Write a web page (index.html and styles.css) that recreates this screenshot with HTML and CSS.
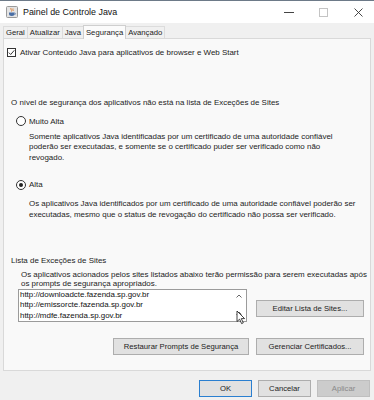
FILE: index.html
```html
<!DOCTYPE html>
<html lang="pt-BR">

<head>
    <meta charset="UTF-8">
    <meta name="viewport" content="width=device-width, initial-scale=1.0">
    <title>Painel de Controle Java</title>
    <link rel="stylesheet" href="styles.css">
</head>

<body>
    <div class="window">
        <div class="titlebar">
            <svg class="app-icon" width="12" height="12" viewBox="0 0 12 12">
                <rect x="0.5" y="0.5" width="11" height="11" rx="1" fill="#e4e4e4" stroke="#9a9a9a"/>
                <path d="M5 2 C4 3.5 6.5 4 5.5 5.5 M7 2.5 C6.3 3.5 7.8 4 7 5" stroke="#e07a2a" stroke-width="0.9" fill="none"/>
                <path d="M3 6.5 H8.5 V8 C8.5 9.2 7.5 10 6 10 H5.5 C4 10 3 9.2 3 8 Z" fill="#4a6fa5"/>
                <path d="M8.5 7 C10 7 10 8.6 8.4 8.6" stroke="#4a6fa5" stroke-width="0.7" fill="none"/>
            </svg>
            <span class="title">Painel de Controle Java</span>
            <div class="controls">
                <span class="ctl ctl-min"></span>
                <span class="ctl ctl-max"></span>
                <svg class="ctl-close" width="9" height="9" viewBox="0 0 9 9">
                    <path d="M0.5 0.5 L8.5 8.5 M8.5 0.5 L0.5 8.5" stroke="#333" stroke-width="0.9"/>
                </svg>
            </div>
        </div>

        <div class="tabs">
            <span class="tab">Geral</span>
            <span class="tab">Atualizar</span>
            <span class="tab">Java</span>
            <span class="tab active">Segurança</span>
            <span class="tab">Avançado</span>
        </div>

        <div class="panel">
            <div class="check-row">
                <svg class="checkbox" width="9" height="9" viewBox="0 0 9 9">
                    <rect x="0.5" y="0.5" width="8" height="8" fill="#fff" stroke="#333"/>
                    <path d="M1.8 4.6 L3.7 6.5 L7.3 2.3" stroke="#222" stroke-width="0.9" fill="none"/>
                </svg>
                <span>Ativar Conteúdo Java para aplicativos de browser e Web Start</span>
            </div>

            <p class="level">O nível de segurança dos aplicativos não está na lista de Exceções de Sites</p>

            <div class="radio-row">
                <span class="radio"></span>
                <span>Muito Alta</span>
            </div>
            <p class="desc">Somente aplicativos Java identificadas por um certificado de uma autoridade confiável poderão ser executadas, e somente se o certificado puder ser verificado como não<br>revogado.</p>

            <div class="radio-row radio-alta">
                <span class="radio checked"></span>
                <span>Alta</span>
            </div>
            <p class="desc">Os aplicativos Java identificados por um certificado de uma autoridade confiável poderão ser executadas, mesmo que o status de revogação do certificado não possa ser verificado.</p>

            <p class="section-title">Lista de Exceções de Sites</p>
            <p class="section-desc">Os aplicativos acionados pelos sites listados abaixo terão permissão para serem executadas após os prompts de segurança apropriados.</p>

            <div class="sites-row">
                <div class="listbox">
                    <div class="sites">
                        <div>http://downloadcte.fazenda.sp.gov.br</div>
                        <div>http://emissorcte.fazenda.sp.gov.br</div>
                        <div>http://mdfe.fazenda.sp.gov.br</div>
                    </div>
                    <div class="scroll">
                        <svg width="6" height="4" viewBox="0 0 6 4">
                            <path d="M0.5 3.5 L3 1 L5.5 3.5" stroke="#555" stroke-width="0.9" fill="none"/>
                        </svg>
                        <svg width="6" height="4" viewBox="0 0 6 4">
                            <path d="M0.5 3.5 L3 1 L5.5 3.5" stroke="#555" stroke-width="0.9" fill="none"/>
                        </svg>
                    </div>
                    <svg class="cursor" width="10" height="15" viewBox="0 0 10 15">
                        <path d="M1 1 V11.5 L3.6 9.2 L5.6 13.6 L7.3 12.8 L5.3 8.6 H8.6 Z" fill="#fff" stroke="#111" stroke-width="0.8" stroke-linejoin="round"/>
                    </svg>
                </div>
                <button class="btn btn-edit">Editar Lista de Sites...</button>
            </div>

            <div class="actions">
                <button class="btn btn-restore">Restaurar Prompts de Segurança</button>
                <button class="btn btn-certs">Gerenciar Certificados...</button>
            </div>
        </div>

        <div class="footer">
            <button class="btn btn-foot btn-ok">OK</button>
            <button class="btn btn-foot">Cancelar</button>
            <button class="btn btn-foot btn-disabled">Aplicar</button>
        </div>
    </div>
</body>

</html>
```

FILE: styles.css
```css
body {
    margin: 0;
    padding: 0;
    background-color: #f0f0f0;
    font-family: "Liberation Sans", Arial, sans-serif;
    font-size: 7.95px;
    color: #1c1c1c;
}

p {
    margin: 0;
}

.window {
    width: 374px;
    height: 400px;
    overflow: hidden;
    position: relative;
}

/* barra de titulo */
.titlebar {
    height: 23px;
    background-color: #ffffff;
    border-top: 1px solid #6d7a88;
    box-sizing: border-box;
    display: flex;
    align-items: center;
}

.app-icon {
    margin-left: 6px;
    margin-right: 5px;
}

.title {
    font-size: 8.9px;
    color: #111;
}

.controls {
    margin-left: auto;
    display: flex;
    align-items: center;
}

.ctl-min {
    width: 10px;
    height: 1px;
    background-color: #444;
    margin-right: 25px;
}

.ctl-max {
    width: 7px;
    height: 7px;
    border: 1px solid #c4c4c4;
    margin-right: 26px;
}

.ctl-close {
    margin-right: 11px;
}

/* abas */
.tabs {
    display: flex;
    align-items: flex-end;
    height: 14px;
    padding-left: 3px;
    margin-top: 1px;
    font-size: 7.7px;
}

.tab {
    height: 11px;
    line-height: 11px;
    padding: 0 2px;
    border: 1px solid #dcdcdc;
    border-bottom: none;
    margin-right: -1px;
    background-color: #f0f0f0;
}

.tab.active {
    height: 13px;
    line-height: 13px;
    background-color: #fbfbfb;
    border-color: #cfcfcf;
    position: relative;
    z-index: 1;
    margin-bottom: -1px;
}

/* painel */
.panel {
    margin: 0 3px;
    height: 333px;
    box-sizing: border-box;
    border: 1px solid #d9d9d9;
    background-color: #f9f9f9;
    padding-left: 3px;
}

.check-row {
    display: flex;
    align-items: center;
    gap: 4px;
    margin-top: 8px;
    height: 10px;
}

.level {
    margin-top: 41px;
    margin-left: 4px;
    line-height: 10.5px;
}

.radio-row {
    display: flex;
    align-items: center;
    gap: 3px;
    height: 11px;
    margin-top: 7px;
    margin-left: 9px;
}

.radio-alta {
    margin-top: 16px;
}

.radio {
    width: 8px;
    height: 8px;
    border: 1px solid #333;
    border-radius: 50%;
    background-color: #fff;
    position: relative;
}

.radio.checked::after {
    content: "";
    position: absolute;
    left: 2px;
    top: 2px;
    width: 4px;
    height: 4px;
    border-radius: 50%;
    background-color: #222;
}

.desc {
    margin: 5px 10px 0 22px;
    line-height: 10.5px;
}

.radio-alta + .desc {
    margin-top: 9px;
}

.section-title {
    margin-top: 36px;
    margin-left: 4px;
    line-height: 10.5px;
}

.section-desc {
    margin: 3px 2px 0 14px;
    line-height: 9.5px;
}

/* lista de sites */
.sites-row {
    display: flex;
    align-items: flex-start;
    margin-left: 11px;
}

.listbox {
    width: 229px;
    height: 33px;
    box-sizing: border-box;
    border: 1px solid #9b9b9b;
    background-color: #fff;
    display: flex;
    position: relative;
}

.sites {
    flex: 1;
    line-height: 10.5px;
    padding-left: 1px;
    color: #111;
}

.scroll {
    width: 10px;
    display: flex;
    flex-direction: column;
    justify-content: space-between;
    align-items: center;
    padding: 4px 0 6px;
    margin-right: 2px;
}

.cursor {
    position: absolute;
    left: 217px;
    top: 20px;
}

.btn {
    font-family: inherit;
    font-size: 7.7px;
    color: #1c1c1c;
    background-color: #e1e1e1;
    border: 1px solid #adadad;
    padding: 0;
    height: 17px;
    box-sizing: border-box;
}

.btn-edit {
    width: 108px;
    margin-left: 9px;
    margin-top: 11px;
}

.actions {
    display: flex;
    justify-content: flex-end;
    gap: 7px;
    margin-top: 16px;
    margin-right: 6px;
}

.btn-restore {
    width: 136px;
}

.btn-certs {
    width: 108px;
}

/* rodape */
.footer {
    display: flex;
    justify-content: flex-end;
    gap: 6px;
    margin-top: 9px;
    margin-right: 4px;
}

.btn-foot {
    width: 53px;
    height: 17px;
}

.btn-ok {
    border-color: #2a7fd0;
}

.btn-disabled {
    background-color: #cccccc;
    border-color: #bfbfbf;
    color: #8a8a8a;
}
```
